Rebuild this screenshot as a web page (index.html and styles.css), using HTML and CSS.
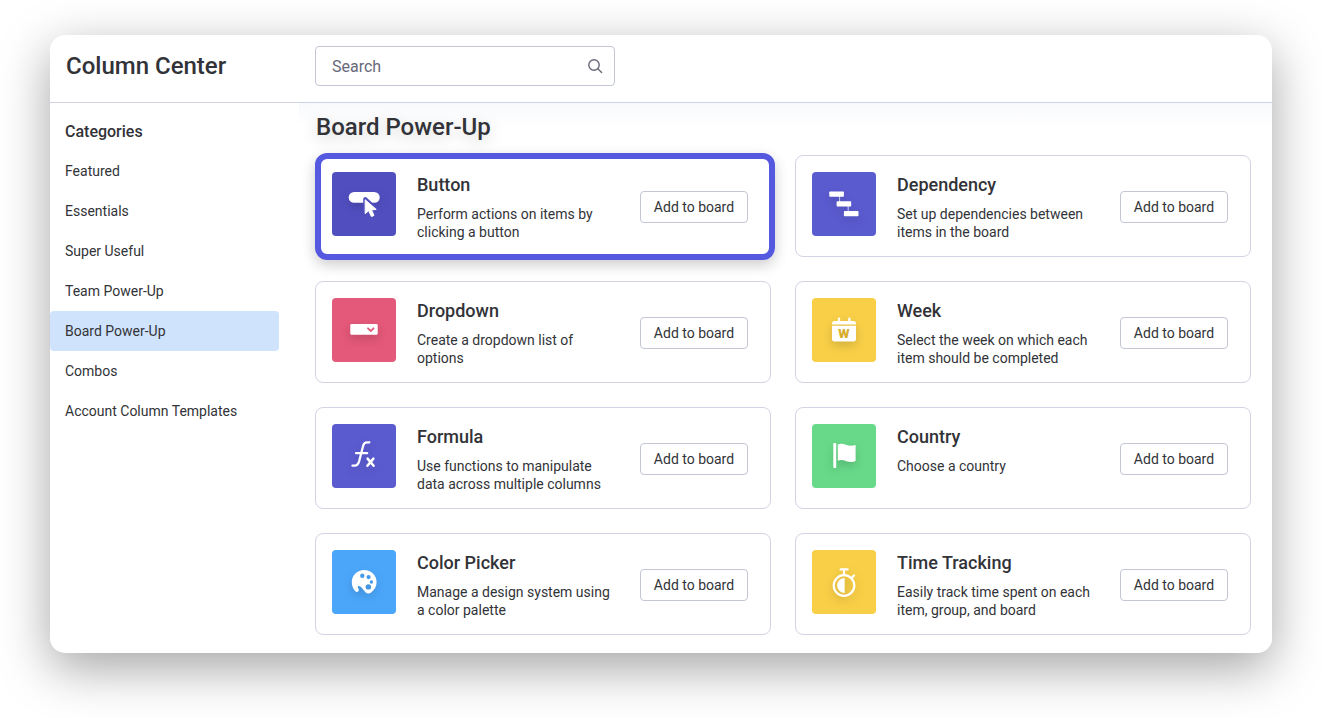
FILE: index.html
```html
<!DOCTYPE html>
<html lang="en">
<head>
<meta charset="utf-8">
<title>Column Center</title>
<link rel="stylesheet" href="styles.css">
</head>
<body>
<div class="window">
  <header class="header">
    <h1 class="title">Column Center</h1>
    <form class="search" role="search">
      <input class="search-input" type="text" placeholder="Search" aria-label="Search">
      <svg class="search-icon" viewBox="0 0 16 16" aria-hidden="true"><circle cx="7" cy="7" r="5.2"/><path d="M10.8 10.8L14.6 14.4"/></svg>
    </form>
  </header>
  <div class="body">
    <nav class="sidebar" aria-label="Categories">
      <h2 class="sidebar-title">Categories</h2>
      <a class="nav-item" href="#">Featured</a>
      <a class="nav-item" href="#">Essentials</a>
      <a class="nav-item" href="#">Super Useful</a>
      <a class="nav-item" href="#">Team Power-Up</a>
      <a class="nav-item nav-active" href="#" aria-current="page">Board Power-Up</a>
      <a class="nav-item" href="#">Combos</a>
      <a class="nav-item" href="#">Account Column Templates</a>
    </nav>
    <main class="main">
      <h2 class="heading">Board Power-Up</h2>
      <div class="grid">
        <article class="card card-highlight">
          <svg class="tile indigo" viewBox="0 0 64 64" aria-hidden="true">
            <g class="glyph"><rect x="16.7" y="20" width="31" height="10.8" rx="5.4"/></g>
            <path class="cut" d="M33.2 27L33.2 41.3L36.5 38.7L39.2 44.4L41.8 43.1L39.4 37.8L44.2 37.2Z"/>
            <path class="cursor" d="M33.2 27.8L33.2 41.6L36.7 38.8L39.4 44.6L42 43.4L39.5 37.9L44.2 37.4Z"/>
          </svg>
          <div class="info"><h3 class="name">Button</h3><p class="desc">Perform actions on items by clicking a button</p></div>
          <button class="add" type="button">Add to board</button>
        </article>
        <article class="card">
          <svg class="tile purple" viewBox="0 0 64 64" aria-hidden="true">
            <g class="glyph"><rect x="17.3" y="19.5" width="14.6" height="5.3" rx=".8"/><rect x="24.6" y="29.2" width="14.6" height="5.3" rx=".8"/><rect x="31.9" y="38.9" width="14.6" height="5.3" rx=".8"/><path class="link" d="M27.6 24V30M36.2 34V39.5"/></g>
          </svg>
          <div class="info"><h3 class="name">Dependency</h3><p class="desc">Set up dependencies between items in the board</p></div>
          <button class="add" type="button">Add to board</button>
        </article>
        <article class="card">
          <svg class="tile red" viewBox="0 0 64 64" aria-hidden="true">
            <g class="glyph"><rect x="18.3" y="26" width="27.4" height="10.8" rx="1.4"/></g>
            <path class="chevron" d="M36 30.3L38.8 33L41.6 30.3"/>
          </svg>
          <div class="info"><h3 class="name">Dropdown</h3><p class="desc">Create a dropdown list of options</p></div>
          <button class="add" type="button">Add to board</button>
        </article>
        <article class="card">
          <svg class="tile yellow" viewBox="0 0 64 64" aria-hidden="true">
            <g class="glyph"><path d="M20 26.4V25.5Q20 23 22.5 23H25.8V21Q25.8 19.6 27 19.6T28.2 21V23H36.2V21Q36.2 19.6 37.4 19.6T38.6 21V23H41.5Q44 23 44 25.5V26.4Z"/><path d="M20 27.7H44V40.8Q44 43.4 41.4 43.4H22.6Q20 43.4 20 40.8Z"/></g>
            <text class="week-letter" x="32" y="40" text-anchor="middle">W</text>
          </svg>
          <div class="info"><h3 class="name">Week</h3><p class="desc">Select the week on which each item should be completed</p></div>
          <button class="add" type="button">Add to board</button>
        </article>
        <article class="card">
          <svg class="tile purple" viewBox="0 0 64 64" aria-hidden="true">
            <g class="glyph lines"><path d="M20.4 41.6H22.6C25.4 41.6 26.3 40.2 27.1 37.4L31.2 21.6C31.9 19 33.2 18.3 35.2 18.3H37.4"/><path d="M24 29.2H35.2"/><path class="thick" d="M35.6 34.6L41.6 41.8M41.4 34.6L35.4 41.8"/></g>
          </svg>
          <div class="info"><h3 class="name">Formula</h3><p class="desc">Use functions to manipulate data across multiple columns</p></div>
          <button class="add" type="button">Add to board</button>
        </article>
        <article class="card">
          <svg class="tile green" viewBox="0 0 64 64" aria-hidden="true">
            <g class="glyph"><rect x="21.3" y="19" width="2.9" height="25" rx=".8"/><path d="M25.8 20.4C29 19.2 31.5 20 34.5 21C37.8 22.1 40.5 21.8 43.6 20.9V37.1C40.5 38.2 37.8 38.2 34.5 37.2C31.5 36.2 29 35.6 25.8 36.7Z"/></g>
          </svg>
          <div class="info"><h3 class="name">Country</h3><p class="desc">Choose a country</p></div>
          <button class="add" type="button">Add to board</button>
        </article>
        <article class="card">
          <svg class="tile blue" viewBox="0 0 64 64" aria-hidden="true">
            <g class="glyph"><path fill-rule="evenodd" d="M32.2 20C25.3 20 19.8 25.4 19.8 32C19.8 36.3 21.4 39.4 23.3 41.2C24.6 42.4 26.3 42.2 26.7 40.5C27.1 38.9 25.6 37.8 25.8 36.8C26 35.7 27.3 35.7 28.4 36.6C30.3 38 31.6 40.4 33.5 42.3C35.3 44.1 37.4 43.8 39.2 42.4C42.5 39.9 44.6 36.4 44.6 32C44.6 25.4 39.1 20 32.2 20ZM30.3 23.5a2.2 2.2 0 1 1 0 4.4a2.2 2.2 0 1 1 0-4.4ZM36.6 25a2.1 2.1 0 1 1 0 4.2a2.1 2.1 0 1 1 0-4.2ZM39.4 30.3a1.7 1.7 0 1 1 0 3.4a1.7 1.7 0 1 1 0-3.4ZM36.4 34.2a2.7 2.7 0 1 1 0 5.4a2.7 2.7 0 1 1 0-5.4Z"/></g>
          </svg>
          <div class="info"><h3 class="name">Color Picker</h3><p class="desc">Manage a design system using a color palette</p></div>
          <button class="add" type="button">Add to board</button>
        </article>
        <article class="card">
          <svg class="tile yellow" viewBox="0 0 64 64" aria-hidden="true">
            <g class="glyph"><path d="M32.6 28V43A7.5 7.5 0 0 1 32.6 28Z"/><g class="lines"><circle cx="32" cy="35.5" r="10.3"/><path d="M28.6 19.4H35.6M32 19.6V25M39.8 27.7L42 25.4"/></g></g>
          </svg>
          <div class="info"><h3 class="name">Time Tracking</h3><p class="desc">Easily track time spent on each item, group, and board</p></div>
          <button class="add" type="button">Add to board</button>
        </article>
      </div>
    </main>
  </div>
</div>
</body>
</html>
```
FILE: styles.css
```css
* { box-sizing: border-box; }
body {
  margin: 0;
  padding: 35px 50px 65px;
  background: #fff;
  color: #323338;
  font-family: Roboto, "Liberation Sans", sans-serif;
  font-size: 14px;
}
h1, h2, h3, p { margin: 0; font-weight: 500; }
.window {
  background: #fff;
  border-radius: 15px;
  box-shadow: 0 15px 50px rgba(0, 0, 0, .36);
}
.header {
  display: flex;
  align-items: center;
  padding: 11px 16px 16px;
  border-bottom: 1px solid #d0d4e4;
}
.title { width: 249px; font-size: 24px; line-height: 32px; }
.search { display: flex; position: relative; width: 300px; }
.search-input {
  width: 100%;
  height: 40px;
  padding: 0 40px 0 16px;
  border: 1px solid #c3c6d4;
  border-radius: 4px;
  background: #fff;
  color: #323338;
  font: 16px Roboto, "Liberation Sans", sans-serif;
}
.search-input::placeholder { color: #676879; opacity: 1; }
.search-icon {
  position: absolute;
  top: 12px;
  right: 12px;
  width: 16px;
  height: 16px;
  fill: none;
  stroke: #676879;
  stroke-width: 1.4;
  stroke-linecap: round;
}
.body { display: flex; }
.sidebar {
  display: flex;
  flex: none;
  flex-direction: column;
  width: 249px;
  padding: 13px 20px 0 0;
}
.sidebar-title { padding-left: 15px; margin-bottom: 3px; font-size: 16px; line-height: 32px; }
.nav-item {
  padding-left: 15px;
  border-radius: 4px;
  color: inherit;
  line-height: 40px;
  text-decoration: none;
}
.nav-active { background: #d0e3fc; }
.main {
  flex: 1;
  min-width: 0;
  padding: 8px 21px 18px 16px;
  border-radius: 0 0 15px 0;
  background: linear-gradient(#f8f9fc, #fff 24px);
}
.heading {
  margin-bottom: 12px;
  padding-left: 1px;
  font-size: 24px;
  line-height: 32px;
  text-shadow: 0 4px 16px rgba(0, 0, 0, .2);
}
.grid { display: grid; grid-template-columns: 1fr 1fr; gap: 24px; }
.card {
  display: flex;
  position: relative;
  align-items: flex-start;
  min-height: 102px;
  padding: 16px 22px 15px 16px;
  border: 1px solid #d0d4e4;
  border-radius: 8px;
  background: #fff;
}
.card-highlight::after {
  content: "";
  position: absolute;
  inset: -3px -5px -4px -1px;
  border: 6px solid #5559df;
  border-radius: 12px;
  box-shadow: 0 5px 14px rgba(0, 0, 0, .2);
  pointer-events: none;
}
.tile { flex: none; width: 64px; height: 64px; border-radius: 4px; }
.indigo { background: #514ec0; }
.purple { background: #5b5bd0; }
.red { background: #e45879; }
.yellow { background: #f8cf47; }
.green { background: #67d988; }
.blue { background: #4ba6fa; }
.glyph { fill: #fff; filter: drop-shadow(0 4px 5px rgba(0, 0, 0, .15)); }
.cut { fill: #514ec0; stroke: #514ec0; stroke-width: 4; stroke-linejoin: round; }
.cursor { fill: #fff; stroke: #fff; stroke-width: 1; stroke-linejoin: round; }
.link { stroke: #fff; stroke-width: 1; opacity: .7; }
.chevron { fill: none; stroke: #e45879; stroke-width: 1.8; stroke-linecap: round; }
.week-letter { fill: #d8ad2c; font: 900 13px Roboto, sans-serif; }
.lines { fill: none; stroke: #fff; stroke-width: 2.2; stroke-linecap: round; }
.thick { stroke-width: 2.5; }
.info { flex: 1; min-width: 0; margin: 0 24px 0 21px; }
.name { margin-bottom: 7px; font-size: 18px; line-height: 26px; }
.desc { font-weight: 400; line-height: 18px; }
.add {
  flex: none;
  width: 108px;
  height: 32px;
  margin-top: 19px;
  padding: 0;
  border: 1px solid #c3c6d4;
  border-radius: 4px;
  background: #fff;
  color: #323338;
  font: 14px Roboto, "Liberation Sans", sans-serif;
}
```
